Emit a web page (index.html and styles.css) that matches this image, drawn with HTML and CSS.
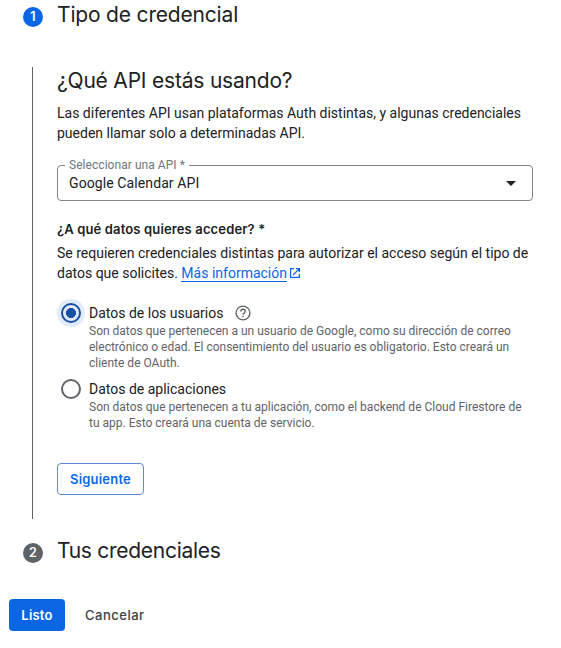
FILE: index.html
```html
<!DOCTYPE html>
<html lang="es">
<head>
<meta charset="utf-8">
<title>Crear credenciales</title>
<link rel="stylesheet" href="styles.css">
</head>
<body>
<main class="stepper">
  <header class="step">
    <span class="step-number active">1</span>
    <h2 class="title title-type">Tipo de credencial</h2>
  </header>
  <section class="step-body">
    <h2 class="title title-api">¿Qué API estás usando?</h2>
    <p class="text">Las diferentes API usan plataformas Auth distintas, y algunas credenciales<br>pueden llamar solo a determinadas API.</p>
    <fieldset class="select">
      <legend>Seleccionar una API *</legend>
      <span>Google Calendar API</span>
      <svg class="arrow" width="10" height="5" viewBox="0 0 10 5"><path d="M0 0h10L5 5z" fill="#202124"/></svg>
    </fieldset>
    <h3 class="question">¿A qué datos quieres acceder? *</h3>
    <p class="text">Se requieren credenciales distintas para autorizar el acceso según el tipo de<br>datos que solicites. <a class="link" href="#">Más información</a><svg class="external" width="10" height="10" viewBox="0 0 10 10" fill="none" stroke="#0b66e4" stroke-width="1.2"><path d="M4.2.6H.6v8.8h8.8V5.8M6 .6h3.4V4M9.2.8 3 7"/></svg></p>
    <div class="options">
      <div class="option">
        <span class="radio checked"></span>
        <div class="option-copy">
          <div class="option-label">Datos de los usuarios
            <svg class="help" width="16" height="16" viewBox="0 0 16 16" fill="none" stroke="#5f6368" stroke-width="1.4"><circle cx="8" cy="8" r="6.9"/><path d="M5.8 6.5c0-1.3.9-2.2 2.2-2.2s2.2.8 2.2 2c0 1.6-2.2 1.7-2.2 3.5"/><path d="M8 10.7v1.5"/></svg>
          </div>
          <p class="description">Son datos que pertenecen a un usuario de Google, como su dirección de correo<br>electrónico o edad. El consentimiento del usuario es obligatorio. Esto creará un<br>cliente de OAuth.</p>
        </div>
      </div>
      <div class="option">
        <span class="radio"></span>
        <div class="option-copy">
          <div class="option-label">Datos de aplicaciones</div>
          <p class="description">Son datos que pertenecen a tu aplicación, como el backend de Cloud Firestore de<br>tu app. Esto creará una cuenta de servicio.</p>
        </div>
      </div>
    </div>
    <button class="button outlined">Siguiente</button>
  </section>
  <header class="step step-two">
    <span class="step-number">2</span>
    <h2 class="title title-credentials">Tus credenciales</h2>
  </header>
</main>
<footer class="actions">
  <button class="button filled">Listo</button>
  <button class="button plain">Cancelar</button>
</footer>
</body>
</html>
```
FILE: styles.css
```css
* { box-sizing: border-box; }
body {
  margin: 0;
  background: #fff;
  color: #202124;
  font: 14px/20px Roboto, sans-serif;
}
h2, h3, p { margin: 0; }
.stepper { padding: 0 0 0 23px; }
.step { display: flex; align-items: flex-start; gap: 14px; height: 28px; }
.step-number {
  width: 20px;
  height: 20px;
  margin-top: 7px;
  border-radius: 50%;
  background: #5f6368;
  color: #fff;
  font: 600 12.5px/20px Inter, sans-serif;
  text-align: center;
}
.step-number.active { background: #0b66e4; }
.title {
  font: 400 21px/28px Inter, sans-serif;
  white-space: nowrap;
}
.step .title { padding-top: 1px; }
.title-type { letter-spacing: -.18px; }
.title-api { letter-spacing: -.2px; }
.title-credentials { letter-spacing: -.28px; }
.step-body {
  height: 452px;
  margin: 39px 0 0 9px;
  padding-left: 24px;
  border-left: 1px solid #5f6368;
}
.text { white-space: nowrap; }
.title-api + .text { margin-top: 8px; }
.select {
  display: flex;
  align-items: center;
  justify-content: space-between;
  width: 476px;
  height: 44px;
  margin: 14px 0 0;
  padding: 0 16px 6px 11px;
  border: 1px solid #80868b;
  border-radius: 4px;
}
.select span { padding-bottom: 1px; letter-spacing: .1px; }
.select legend {
  height: 16px;
  margin-left: -4px;
  padding: 0 4px;
  color: #70757a;
  font-size: 12px;
  line-height: 16px;
  letter-spacing: .05px;
}
.question {
  margin: 18px 0 4px;
  font: 600 13px/20px Inter, sans-serif;
  letter-spacing: .14px;
  white-space: nowrap;
}
.link {
  display: inline-block;
  height: 19px;
  border-bottom: 1px solid #0b66e4;
  color: #0b66e4;
  text-decoration: none;
}
.external { margin-left: 3px; }
.options { display: grid; gap: 8px; margin: 20px 0 0 4px; }
.option { display: flex; gap: 8px; }
.radio {
  flex: none;
  width: 20px;
  height: 20px;
  border: 2px solid #5f6368;
  border-radius: 50%;
}
.radio.checked {
  border-color: #174ea6;
  background: radial-gradient(circle, #174ea6 4.7px, #e1ebfb 5.3px);
  box-shadow: 0 0 0 4px #e1ebfb;
}
.option-label { display: flex; align-items: center; gap: 12px; height: 20px; }
.description {
  color: #5f6368;
  font-size: 12px;
  line-height: 16px;
  white-space: nowrap;
}
.button {
  height: 32px;
  padding: 0;
  border: 0;
  border-radius: 4px;
  font: 600 13px/20px Inter, sans-serif;
  letter-spacing: .2px;
}
.outlined {
  display: block;
  width: 87px;
  margin-top: 32px;
  border: 1px solid #5c8ad8;
  background: #fff;
  color: #0b66e4;
}
.step-two { margin-top: 17px; }
.actions { display: flex; gap: 20px; margin: 35px 0 0 9px; }
.filled { width: 56px; background: #0b66e4; color: #fff; }
.plain { background: none; color: #3c4043; font-weight: 500; letter-spacing: .5px; }
```
